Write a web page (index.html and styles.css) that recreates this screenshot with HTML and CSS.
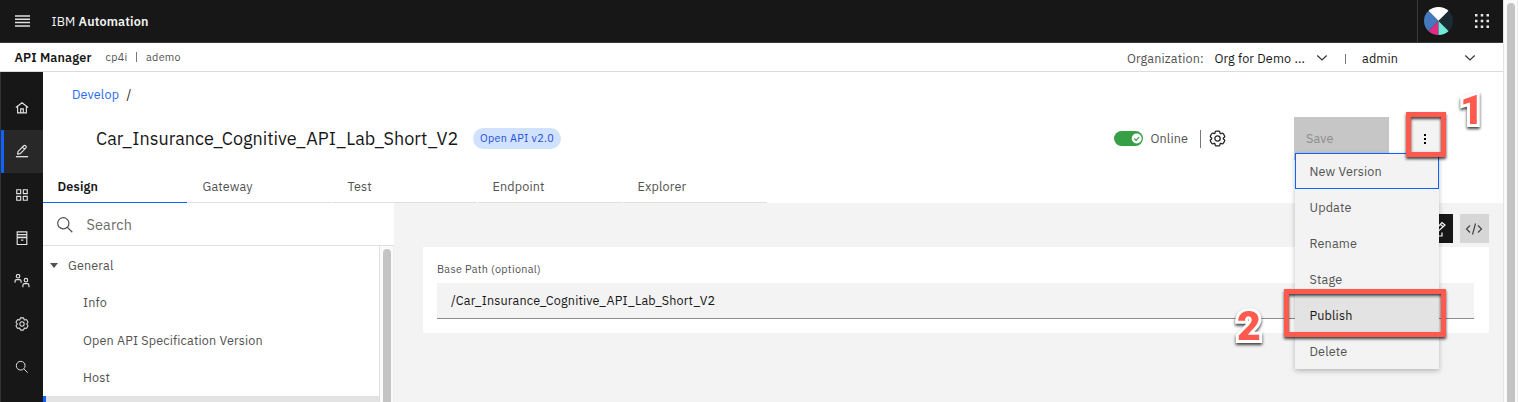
FILE: index.html
```html
<!DOCTYPE html>
<html lang="en">
<head>
<meta charset="utf-8">
<title>API Manager</title>
<link rel="stylesheet" href="styles.css">
</head>
<body>
<svg width="0" height="0" class="defs">
  <symbol id="gear" viewBox="0 0 32 32"><path d="M27 16.76V15.24l1.92-1.68A2 2 0 0 0 29.3 11l-2.36-4a2 2 0 0 0-2.37-.89l-2.43.82a11 11 0 0 0-1.31-.75l-.51-2.52A2 2 0 0 0 18.36 2h-4.68a2 2 0 0 0-2 1.61l-.51 2.52a11.5 11.5 0 0 0-1.32.75L7.43 6.06A2 2 0 0 0 5.06 7l-2.36 4a2 2 0 0 0 .41 2.51L5 15.24v1.52l-1.89 1.68A2 2 0 0 0 2.7 21l2.36 4a2 2 0 0 0 2.37.89l2.43-.82a11 11 0 0 0 1.31.75l.51 2.52a2 2 0 0 0 2 1.61h4.72a2 2 0 0 0 2-1.61l.51-2.52a11.5 11.5 0 0 0 1.32-.75l2.42.82A2 2 0 0 0 27 25l2.3-4a2 2 0 0 0-.41-2.51Z" fill="none" stroke="currentColor" stroke-width="2.4"/><circle cx="16" cy="16" r="5" fill="none" stroke="currentColor" stroke-width="2.4"/></symbol>
  <symbol id="glass" viewBox="0 0 32 32"><circle cx="13" cy="13" r="10" fill="none" stroke="currentColor" stroke-width="2.2"/><path d="M20.3 20.3 29 29" stroke="currentColor" stroke-width="2.2"/></symbol>
  <symbol id="chev" viewBox="0 0 12 8"><path d="M1.3 1.5 6 6l4.700-4.500" fill="none" stroke="currentColor" stroke-width="1.200"/></symbol>
</svg>
<div class="app">
  <div class="main">
    <header class="topbar">
      <svg class="burger" viewBox="0 0 15 12"><path d="M0 1h15M0 4.300h15M0 7.600h15M0 10.900h15" stroke="#e0e0e0" stroke-width="1.500"/></svg>
      <span class="brand">IBM <b>Automation</b></span>
      <div class="user">
        <svg class="avatar" viewBox="-14.500 -14 29 28"><defs><clipPath id="r"><ellipse rx="14.500" ry="14"/></clipPath></defs><g clip-path="url(#r)"><path d="M0 0-15-15H15Z" fill="#fff"/><path d="M0 0 15-15V15Z" fill="#1b2b34"/><path d="M0 0-15-15V15Z" fill="#4479be"/><path d="M0 0-15 15H0Z" fill="#dc2d82"/><path d="M0 0V15H15Z" fill="#70ead6"/></g></svg>
        <svg class="waffle" viewBox="0 0 14 14" fill="#e8e8e8"><path d="M0 0h2.500v2.500H0zM5.750 0h2.500v2.500h-2.500zM11.500 0H14v2.500h-2.500zM0 5.750h2.500v2.500H0zM5.750 5.750h2.500v2.500h-2.500zM11.500 5.750H14v2.500h-2.500zM0 11.500h2.500V14H0zM5.750 11.500h2.500V14h-2.500zM11.500 11.500H14V14h-2.500z"/></svg>
      </div>
    </header>
    <div class="subbar">
      <b class="product">API Manager</b>
      <span class="inst">cp4i</span><i class="bar"></i><span class="inst">ademo</span>
      <div class="org">
        <span class="org-label">Organization:</span><span class="org-name">Org for Demo ...</span>
        <svg class="chev"><use href="#chev"/></svg><i class="bar"></i><span class="org-user">admin</span><svg class="chev"><use href="#chev"/></svg>
      </div>
    </div>
    <div class="body">
      <nav class="rail">
        <a><svg viewBox="0 0 32 32"><path d="M2 15 16 4l14 11M6 13v14h20V13M13 27v-9h6v9"/></svg></a>
        <a class="on"><svg viewBox="0 0 32 32"><path d="M2 29h28" stroke-width="3"/><path d="M6 23l1-6L20 4q2-2 4 0l1 1q2 2 0 4L12 22ZM17 7l5 5"/></svg></a>
        <a><svg viewBox="0 0 32 32"><path d="M4 4h9v9H4zM19 4h9v9h-9zM4 19h9v9H4zM19 19h9v9h-9z"/></svg></a>
        <a><svg viewBox="0 0 32 32"><path d="M5 2h22v29H5zM5 8h22M5 15h22M14 21h5" /><path d="M5 11.500h22" stroke-width="1.500"/></svg></a>
        <a><svg class="wide" viewBox="0 0 36 32"><circle cx="9" cy="5" r="4"/><path d="M2 20v-3q0-4 4-4h6q4 0 4 4v3"/><circle cx="27" cy="14" r="4"/><path d="M20 30v-4q0-4 4-4h6q4 0 4 4v4"/></svg></a>
        <a><svg viewBox="0 0 32 32"><use href="#gear"/></svg></a>
        <a><svg viewBox="0 0 32 32"><use href="#glass"/></svg></a>
      </nav>
      <div class="page">
        <div class="head">
          <div class="crumbs"><a>Develop</a><span>/</span></div>
          <div class="title-row">
            <h1>Car_Insurance_Cognitive_API_Lab_Short_V2</h1>
            <span class="tag">Open API v2.0</span>
            <div class="actions">
              <svg class="toggle" viewBox="0 0 29 15"><rect width="29" height="15" rx="7.500" fill="#379f45"/><circle cx="22.700" cy="7.500" r="5" fill="#fff"/><path d="m20.300 7.500 1.800 1.800 3-3.200" fill="none" stroke="#379f45" stroke-width="1.200"/></svg>
              <span class="online">Online</span><i class="rule"></i>
              <svg class="gear"><use href="#gear"/></svg>
              <button class="save">Save</button>
              <button class="kebab"><svg viewBox="0 0 4 12"><path d="M1 1h2v2H1zM1 5h2v2H1zM1 9h2v2H1z"/></svg></button>
            </div>
          </div>
          <div class="tabs"><b class="on">Design</b><span>Gateway</span><span>Test</span><span>Endpoint</span><span>Explorer</span></div>
        </div>
        <div class="work">
          <aside class="side">
            <div class="search"><svg><use href="#glass"/></svg><span>Search</span></div>
            <div class="tree-wrap">
              <div class="tree"><div class="group"><i></i>General</div><div>Info</div><div class="spec">Open API Specification Version</div><div>Host</div><div class="sel"></div></div>
              <div class="track"><i></i></div>
            </div>
          </aside>
          <section class="content">
            <div class="modes">
              <button class="form"><svg viewBox="0 0 16 18"><path d="m4 9 6-6.500 3 2.500L6.500 11 3.500 12ZM8.500 4.500l3 2.500M10 12.500V16H3"/></svg></button>
              <button class="code"><svg viewBox="0 0 18 12"><path d="M5 2.500 1.500 6 5 9.500M13 2.500 16.500 6 13 9.500M10.500.5l-3 11"/></svg></button>
            </div>
            <div class="card"><label>Base Path (optional)</label><div class="field">/Car_Insurance_Cognitive_API_Lab_Short_V2</div></div>
          </section>
        </div>
      </div>
    </div>
  </div>
  <div class="scroll"><i></i></div>
  <div class="menu"><span class="focus">New Version</span><span>Update</span><span>Rename</span><span>Stage</span><span class="hover">Publish</span><span>Delete</span></div>
  <div class="mark mark-one"></div>
  <div class="mark mark-two"></div>
  <span class="num num-one">1</span>
  <span class="num num-two">2</span>
</div>
</body>
</html>
```
FILE: styles.css
```css
* { box-sizing: border-box; }
body { margin: 0; font: 12.6px/18px "IBM Plex Sans", Roboto, "Noto Sans", sans-serif; color: #525252; letter-spacing: .15px; overflow: hidden; }
svg { display: block; flex: none; }
button { border: 0; padding: 0; margin: 0; font: inherit; letter-spacing: inherit; }
span, b, a, h1 { white-space: nowrap; }
b { font-weight: 600; }
.defs { position: absolute; }
.app { position: relative; display: flex; width: 1518px; height: 402px; overflow: hidden; background: #fff; }
.main { width: 1503px; display: flex; flex-direction: column; }
.topbar { height: 43px; flex: none; display: flex; align-items: center; background: #171717; border-bottom: 1px solid #393939; padding-left: 14.500px; color: #f4f4f4; }
.burger { width: 15px; height: 12px; }
.brand { margin-left: 22px; letter-spacing: .15px; }
.user { margin-left: auto; width: 86px; height: 42px; border-left: 1px solid #393939; display: flex; align-items: center; padding-left: 6px; }
.avatar { width: 29px; height: 28px; }
.waffle { width: 14px; height: 14px; margin-left: 22px; }
.subbar { height: 29px; flex: none; display: flex; align-items: center; border-bottom: 1px solid #dcdcdc; padding-left: 14.500px; }
.product { color: #171717; width: 91px; }
.inst { font-size: 10.800px; letter-spacing: .29px; }
.bar { width: 1px; height: 10px; background: #777; margin: 0 9px 0 8.500px; }
.org { margin-left: auto; display: flex; align-items: center; color: #171717; padding: 2px 27px 0 0; }
.org-label { color: #525252; width: 87.500px; }
.org-name { width: 101.500px; }
.chev { width: 12px; height: 8px; color: #333; }
.org .bar { margin: 1px 16px 0 17px; }
.org-user { width: 102px; }
.body { flex: 1; display: flex; }
.rail { width: 43px; background: #171717; padding-top: 15px; border-left: 1px solid #333; }
.rail a { display: flex; height: 43px; align-items: center; justify-content: center; color: #e4e4e4; border-left: 3px solid transparent; padding: 0 4px 1px 0; }
.rail a.on { background: #282828; border-color: #0f62fe; }
.rail a:nth-child(n+3) { padding-bottom: 0; }
.rail a:nth-child(n+5) { padding: 1px 4px 0 0; }
.rail svg { width: 14px; height: 14px; fill: none; stroke: currentColor; stroke-width: 2.600; }
.rail svg.wide { width: 16px; }
.page { flex: 1; display: flex; flex-direction: column; }
.head { height: 131px; flex: none; }
.crumbs { height: 45px; padding: 13px 0 0 29px; display: flex; gap: 7.500px; color: #171717; }
.crumbs a { color: #2a6af0; }
.title-row { display: flex; height: 43px; align-items: center; padding-left: 53px; }
h1 { margin: 0; font-size: 18px; line-height: 24px; font-weight: 400; color: #171717; letter-spacing: 0; width: 377px; }
.tag { height: 21px; width: 88px; border-radius: 11px; background: #d0e2ff; color: #1d4fd7; font-size: 10.800px; line-height: 21px; text-align: center; letter-spacing: .29px; }
.actions { margin-left: auto; display: flex; align-items: center; padding-right: 62px; }
.toggle { width: 29px; height: 15px; }
.online { margin-left: 7.500px; width: 49.500px; padding-bottom: 1px; }
.rule { width: 1px; height: 18px; background: #777; }
.gear { width: 17px; height: 17px; color: #222; margin-left: 7.500px; margin-right: .5px; }
.save { width: 95px; height: 43px; background: #c6c6c6; color: #8d8d8d; text-align: left; padding: 0 0 1px 12px; margin-left: 68px; }
.kebab { width: 30px; height: 43px; margin-left: 22px; background: #f3f3f3; display: flex; align-items: center; justify-content: center; }
.kebab svg { width: 4px; height: 12px; margin-right: 2px; }
.tabs { display: flex; gap: 1px; height: 43px; }
.tabs > * { width: 144px; padding: 17px 0 0 14.500px; border-bottom: 1px solid #dfdfdf; }
.tabs .on { color: #171717; border-color: #0f62fe; }
.work { flex: 1; display: flex; }
.side { width: 351px; display: flex; flex-direction: column; }
.search { height: 43px; display: flex; align-items: center; border-bottom: 1px solid #dfdfdf; padding: 1px 0 0 13px; font-size: 14.400px; color: #6b6b6b; }
.search svg { width: 18px; height: 18px; color: #525252; margin-right: 12.500px; }
.tree-wrap { flex: 1; display: flex; }
.tree { width: 337px; border-right: 1px solid #dfdfdf; overflow: hidden; height: 156px; }
.tree div { height: 37.500px; line-height: 37px; padding-left: 40px; }
.tree .spec { line-height: 38px; }
.tree .group { display: flex; align-items: center; padding: 1px 0 0 7px; }
.group i { border: 4px solid transparent; border-top: 5px solid #525252; border-bottom: 0; margin-right: 10px; }
.tree .sel { background: #e3e3e3; border-left: 3px solid #0f62fe; }
.track { flex: 1; background: #fafafa; padding: 3px 0 0 3px; height: 156px; border-right: 1px solid #eee; }
.track i { display: block; width: 8px; height: 153px; background: #c4c4c4; border-radius: 4px 4px 0 0; }
.content { flex: 1; background: #f3f3f3; padding: 11px 14px 0 29px; }
.modes { display: flex; justify-content: flex-end; gap: 7px; }
.modes button { width: 29px; height: 29px; display: flex; align-items: center; justify-content: center; }
.modes svg { fill: none; stroke: currentColor; stroke-width: 1.200; }
.form { background: #171717; color: #fff; }
.form svg { width: 16px; height: 18px; margin-left: 2px; }
.modes .code { background: #d6d6d6; color: #444; padding-right: 1px; }
.code svg { width: 18px; height: 12px; }
.card { margin-top: 4px; height: 86px; background: #fff; padding: 14px 15px 0 14px; }
.card label { display: block; font-size: 10.800px; height: 22px; line-height: 17px; letter-spacing: .29px; }
.field { height: 36px; background: #f3f3f3; border-bottom: 1px solid #8d8d8d; color: #171717; padding: 8px 14px; }
.scroll { width: 15px; background: #fafafa; border-left: 1px solid #e4e4e4; border-right: 1px solid #eee; padding: 3px 0 0 3px; }
.scroll i { display: block; width: 8px; height: 399px; background: #c4c4c4; border-radius: 4px 4px 0 0; }
.menu { position: absolute; left: 1295px; top: 153px; width: 144px; background: #f3f3f3; box-shadow: 0 2px 5px rgba(0,0,0,.25); display: flex; flex-direction: column; }
.menu span { height: 36px; line-height: 36px; padding: 0 0 0 14.500px; }
.menu .focus { border: 1px solid #0f62fe; line-height: 34px; padding-left: 13.500px; }
.menu .hover { background: #e3e3e3; color: #171717; }
.mark { position: absolute; border: 5px solid #ff5a4d; filter: drop-shadow(0 2px 1.500px rgba(0,0,0,.75)); }
.mark-one { left: 1406px; top: 112px; width: 40px; height: 45px; }
.mark-two { left: 1284px; top: 289px; width: 162px; height: 48px; }
.num { position: absolute; font: 900 41px/44px Roboto, "Liberation Sans", sans-serif; letter-spacing: 0; color: #ff5a4d; -webkit-text-stroke: 6px #fff; paint-order: stroke fill; stroke-linejoin: round; filter: drop-shadow(0 2px 1.500px rgba(0,0,0,.75)); }
.num-one { left: 1460px; top: 88px; }
.num-two { left: 1237px; top: 304px; }
```
